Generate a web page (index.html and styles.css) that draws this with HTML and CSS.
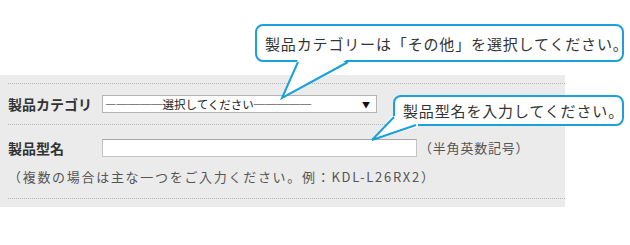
FILE: index.html
```html
<!DOCTYPE html>
<html>
<head>
<meta charset="utf-8">
<title>製品情報</title>
<link rel="stylesheet" href="styles.css">
</head>
<body>

<div class="page">

    <!-- product form -->
    <div class="form">
        <div class="fields">
            <div class="row row-category">
                <div class="label">製品カテゴリ</div>
                <div class="select-box">
                    <span class="select-text">―────選択してください─────</span>
                    <span class="arrow">▼</span>
                </div>
            </div>

            <div class="row row-model">
                <div class="line">
                    <div class="label">製品型名</div>
                    <input class="text-input" type="text">
                    <span class="hint">（半角英数記号）</span>
                </div>
                <p class="note">（複数の場合は主な一つをご入力ください。例：KDL-L26RX2）</p>
            </div>
        </div>
    </div>

    <!-- callouts -->
    <div class="bubble bubble-category">製品カテゴリーは「その他」を選択してください。</div>
    <svg class="tail tail-category" width="80" height="44" viewBox="0 0 80 44">
        <polygon points="20,0 4,39 70,0" fill="#ffffff"/>
        <polyline points="20,3 4,39 70,3" fill="none" stroke="#1aa0dc" stroke-width="2"/>
    </svg>

    <div class="bubble bubble-model">製品型名を入力してください。</div>
    <svg class="tail tail-model" width="60" height="40" viewBox="0 0 60 40">
        <polygon points="22,6 2,30 48,17 48,13.5 30,13.5 26,10 26,6" fill="#ffffff"/>
        <polyline points="24,7 2,30 46,15" fill="none" stroke="#1aa0dc" stroke-width="2"/>
    </svg>

</div>

</body>
</html>
```

FILE: styles.css
```css
body {
    margin: 0;
    background-color: #ffffff;
    font-family: "Noto Sans CJK JP", "Noto Sans", sans-serif;
    color: #333333;
}

.page {
    position: relative;
    width: 630px;
    height: 245px;
    overflow: hidden;
}

/* form panel */

.form {
    margin-top: 75px;
    width: 557px;
    padding: 8px 0 8px 8px;
    background-color: #ebebeb;
}

.fields {
    border-top: 1px dotted #b8b8b8;
}

.row {
    border-bottom: 1px dotted #b8b8b8;
}

.row-category {
    display: flex;
    align-items: center;
    padding: 11px 0 11px 0;
}

.row-model {
    padding: 13px 0 11px 0;
}

.line {
    display: flex;
    align-items: center;
}

.label {
    width: 94px;
    flex-shrink: 0;
    font-size: 14px;
    font-weight: bold;
    line-height: 18px;
    color: #333333;
}

.select-box {
    display: flex;
    align-items: center;
    justify-content: space-between;
    box-sizing: border-box;
    width: 275px;
    height: 18px;
    padding: 0 6px 0 2px;
    background-color: #ffffff;
    border: 1px solid #b4b4b4;
}

.select-text {
    font-size: 11.5px;
    line-height: 16px;
    color: #222222;
    white-space: nowrap;
}

.arrow {
    font-size: 8px;
    color: #111111;
}

.text-input {
    box-sizing: border-box;
    width: 315px;
    height: 18px;
    margin: 0;
    padding: 0 3px;
    background-color: #ffffff;
    border: 1px solid #c4c4c4;
    border-top-color: #a8a8a8;
}

.hint {
    margin-left: 2px;
    font-size: 13px;
    letter-spacing: 0.8px;
    color: #555555;
}

.note {
    margin: 10px 0 0 0;
    font-size: 13px;
    line-height: 20px;
    letter-spacing: 1.7px;
    color: #555555;
}

/* callouts */

.bubble {
    position: absolute;
    box-sizing: border-box;
    right: 6px;
    display: flex;
    align-items: center;
    padding-left: 8px;
    background-color: #ffffff;
    border: 2px solid #1aa0dc;
    border-radius: 8px;
    font-size: 15px;
    letter-spacing: 0.85px;
    color: #333333;
    white-space: nowrap;
}

.bubble-category {
    top: 24px;
    left: 255px;
    height: 38px;
}

.bubble-model {
    top: 95px;
    left: 393px;
    height: 31px;
}

.tail {
    position: absolute;
}

.tail-category {
    left: 278px;
    top: 59px;
}

.tail-model {
    left: 370px;
    top: 110px;
}
```
